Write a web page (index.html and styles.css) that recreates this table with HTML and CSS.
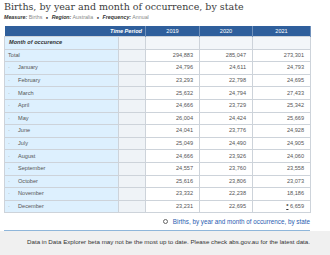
FILE: index.html
```html
<!DOCTYPE html>
<html lang="en">
<head>
    <meta charset="UTF-8">
    <meta name="viewport" content="width=device-width, initial-scale=1.0">
    <title>Births, by year and month of occurrence</title>
    <link rel="stylesheet" href="styles.css">
</head>
<body>
    <div class="page">
        <h1 class="title">Births, by year and month of occurrence, by state</h1>
        <div class="meta">
            <b>Measure:</b> Births <span class="dot">●</span>
            <b>Region:</b> Australia <span class="dot">●</span>
            <b>Frequency:</b> Annual
        </div>
        <table class="grid">
            <colgroup>
                <col class="c-name"><col class="c-gap"><col class="c-y1"><col class="c-y2"><col class="c-y3">
            </colgroup>
            <thead>
                <tr class="head">
                    <th colspan="2" class="period">Time Period</th>
                    <th>2019</th>
                    <th>2020</th>
                    <th>2021</th>
                </tr>
            </thead>
            <tbody>
                <tr class="sub">
                    <td class="name dim">Month of occurence</td>
                    <td class="gap"></td><td></td><td></td><td></td>
                </tr>
                <tr><td class="name">Total</td><td class="gap"></td><td>294,883</td><td>285,047</td><td>273,301</td></tr>
                <tr><td class="name"><span class="bul">·</span>January</td><td class="gap"></td><td>24,796</td><td>24,611</td><td>24,793</td></tr>
                <tr><td class="name"><span class="bul">·</span>February</td><td class="gap"></td><td>23,293</td><td>22,798</td><td>24,695</td></tr>
                <tr><td class="name"><span class="bul">·</span>March</td><td class="gap"></td><td>25,632</td><td>24,794</td><td>27,433</td></tr>
                <tr><td class="name"><span class="bul">·</span>April</td><td class="gap"></td><td>24,666</td><td>23,729</td><td>25,342</td></tr>
                <tr><td class="name"><span class="bul">·</span>May</td><td class="gap"></td><td>26,004</td><td>24,424</td><td>25,669</td></tr>
                <tr><td class="name"><span class="bul">·</span>June</td><td class="gap"></td><td>24,041</td><td>23,776</td><td>24,928</td></tr>
                <tr><td class="name"><span class="bul">·</span>July</td><td class="gap"></td><td>25,049</td><td>24,490</td><td>24,905</td></tr>
                <tr><td class="name"><span class="bul">·</span>August</td><td class="gap"></td><td>24,666</td><td>23,926</td><td>24,060</td></tr>
                <tr><td class="name"><span class="bul">·</span>September</td><td class="gap"></td><td>24,557</td><td>23,760</td><td>23,558</td></tr>
                <tr><td class="name"><span class="bul">·</span>October</td><td class="gap"></td><td>25,616</td><td>23,806</td><td>23,073</td></tr>
                <tr><td class="name"><span class="bul">·</span>November</td><td class="gap"></td><td>23,332</td><td>22,238</td><td>18,186</td></tr>
                <tr><td class="name"><span class="bul">·</span>December</td><td class="gap"></td><td>23,231</td><td>22,695</td><td><span class="flag">*</span> 6,659</td></tr>
            </tbody>
        </table>
        <div class="source">
            <span class="ring"></span>
            <a href="#">Births, by year and month of occurrence, by state</a>
        </div>
    </div>
    <footer>Data in Data Explorer beta may not be the most up to date. Please check abs.gov.au for the latest data.</footer>
</body>
</html>
```

FILE: styles.css
```css
body {
    margin: 0;
    padding: 0;
    background-color: #fff;
    font-family: 'Liberation Sans', Arial, sans-serif;
    color: #333;
    overflow: hidden;
}
.page {
    padding: 0 20px 0 4px;
}
.title {
    margin: 0;
    padding-top: 1px;
    font-family: 'DejaVu Serif', serif;
    font-weight: normal;
    font-size: 9.5px;
    line-height: 12px;
    color: #3c3c3c;
}
.meta {
    margin-top: 1px;
    font-size: 5.3px;
    line-height: 7px;
    color: #888;
}
.meta b {
    font-style: italic;
    color: #333;
}
.meta .dot {
    color: #222;
    font-size: 4px;
    margin: 0 2px;
}
.grid {
    margin-top: 5px;
    border-collapse: collapse;
    table-layout: fixed;
    width: 306px;
    font-size: 5.6px;
    line-height: 7px;
}
.c-name { width: 114px; }
.c-gap { width: 27px; }
.c-y1 { width: 54px; }
.c-y2 { width: 53px; }
.c-y3 { width: 58px; }
.head th {
    height: 10px;
    padding: 0 3px;
    background-color: #2f5f9c;
    color: #fff;
    font-weight: normal;
    border-right: 1px solid #6f90bb;
    text-align: center;
}
.head .period {
    text-align: right;
    font-weight: bold;
    font-style: italic;
}
.grid td {
    height: 11.6px;
    padding: 0 6px;
    border: 1px solid #cdd3da;
    text-align: right;
    color: #555;
    background-color: #fff;
    white-space: nowrap;
}
.grid td.name {
    text-align: left;
    padding-left: 3px;
    background-color: #ddf0fe;
    color: #555;
}
.grid td.gap {
    background-color: #eff3f7;
}
.sub td {
    background-color: #f3f6f9;
}
.grid td.dim {
    font-weight: bold;
    font-style: italic;
    color: #333;
    padding-left: 4px;
}
.bul {
    display: inline-block;
    width: 10px;
    color: #888;
}
.flag {
    text-decoration: underline;
    color: #333;
    font-weight: bold;
}
.source {
    width: 306px;
    text-align: right;
    margin-top: 4px;
    font-size: 6.3px;
    line-height: 9px;
    border-bottom: 1px solid #8fb6da;
    padding-bottom: 4px;
}
.source a {
    color: #2a5db0;
    text-decoration: none;
}
.ring {
    display: inline-block;
    width: 3px;
    height: 3px;
    border: 1px solid #666;
    border-radius: 50%;
    margin-right: 3px;
}
footer {
    background-color: #f0f0f0;
    height: 30px;
    padding: 7px 20px 0 4px;
    box-sizing: border-box;
    width: 330px;
    font-size: 6.2px;
    text-align: right;
    color: #333;
}
```
